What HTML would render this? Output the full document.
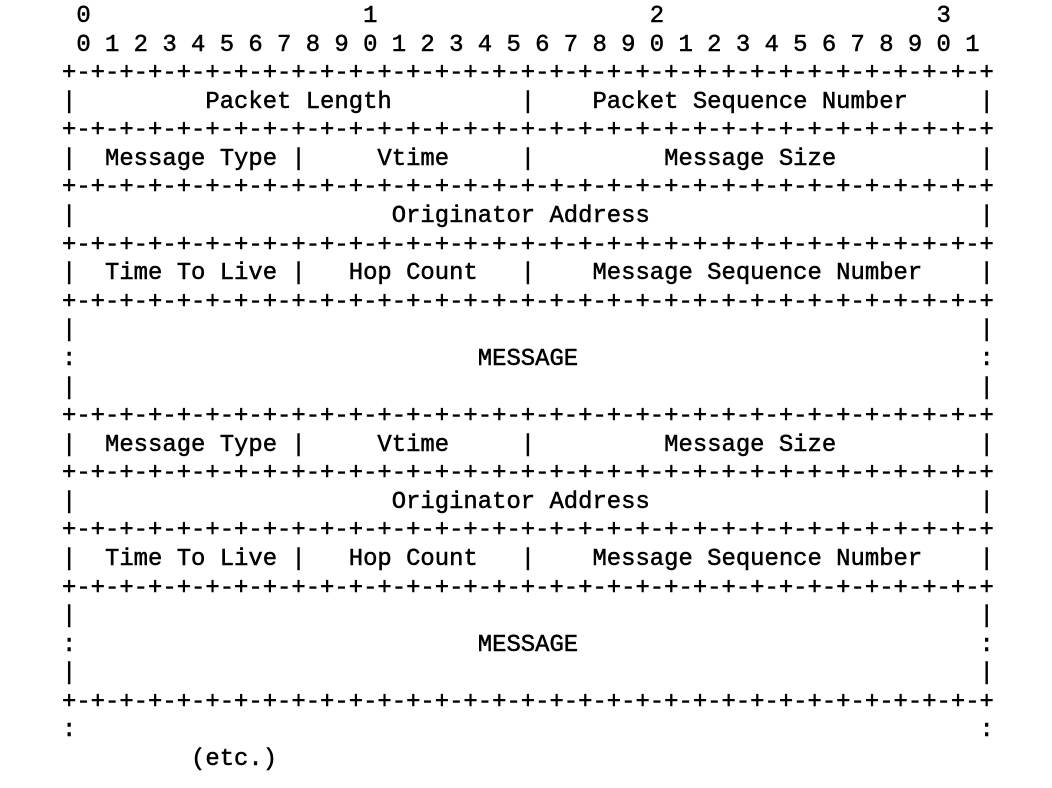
<!DOCTYPE html>
<html><head><meta charset="utf-8"><style>
html,body{margin:0;padding:0;background:#fff;width:1052px;height:788px;overflow:hidden}
pre{position:absolute;left:62px;top:3px;margin:0;font-family:"Liberation Mono",monospace;font-size:23.9px;line-height:28.58px;color:#000;font-weight:normal;-webkit-text-stroke:0.5px #000}
</style></head><body><pre> 0                   1                   2                   3
 0 1 2 3 4 5 6 7 8 9 0 1 2 3 4 5 6 7 8 9 0 1 2 3 4 5 6 7 8 9 0 1
+-+-+-+-+-+-+-+-+-+-+-+-+-+-+-+-+-+-+-+-+-+-+-+-+-+-+-+-+-+-+-+-+
|         Packet Length         |    Packet Sequence Number     |
+-+-+-+-+-+-+-+-+-+-+-+-+-+-+-+-+-+-+-+-+-+-+-+-+-+-+-+-+-+-+-+-+
|  Message Type |     Vtime     |         Message Size          |
+-+-+-+-+-+-+-+-+-+-+-+-+-+-+-+-+-+-+-+-+-+-+-+-+-+-+-+-+-+-+-+-+
|                      Originator Address                       |
+-+-+-+-+-+-+-+-+-+-+-+-+-+-+-+-+-+-+-+-+-+-+-+-+-+-+-+-+-+-+-+-+
|  Time To Live |   Hop Count   |    Message Sequence Number    |
+-+-+-+-+-+-+-+-+-+-+-+-+-+-+-+-+-+-+-+-+-+-+-+-+-+-+-+-+-+-+-+-+
|                                                               |
:                            MESSAGE                            :
|                                                               |
+-+-+-+-+-+-+-+-+-+-+-+-+-+-+-+-+-+-+-+-+-+-+-+-+-+-+-+-+-+-+-+-+
|  Message Type |     Vtime     |         Message Size          |
+-+-+-+-+-+-+-+-+-+-+-+-+-+-+-+-+-+-+-+-+-+-+-+-+-+-+-+-+-+-+-+-+
|                      Originator Address                       |
+-+-+-+-+-+-+-+-+-+-+-+-+-+-+-+-+-+-+-+-+-+-+-+-+-+-+-+-+-+-+-+-+
|  Time To Live |   Hop Count   |    Message Sequence Number    |
+-+-+-+-+-+-+-+-+-+-+-+-+-+-+-+-+-+-+-+-+-+-+-+-+-+-+-+-+-+-+-+-+
|                                                               |
:                            MESSAGE                            :
|                                                               |
+-+-+-+-+-+-+-+-+-+-+-+-+-+-+-+-+-+-+-+-+-+-+-+-+-+-+-+-+-+-+-+-+
:                                                               :
         (etc.)</pre></body></html>
